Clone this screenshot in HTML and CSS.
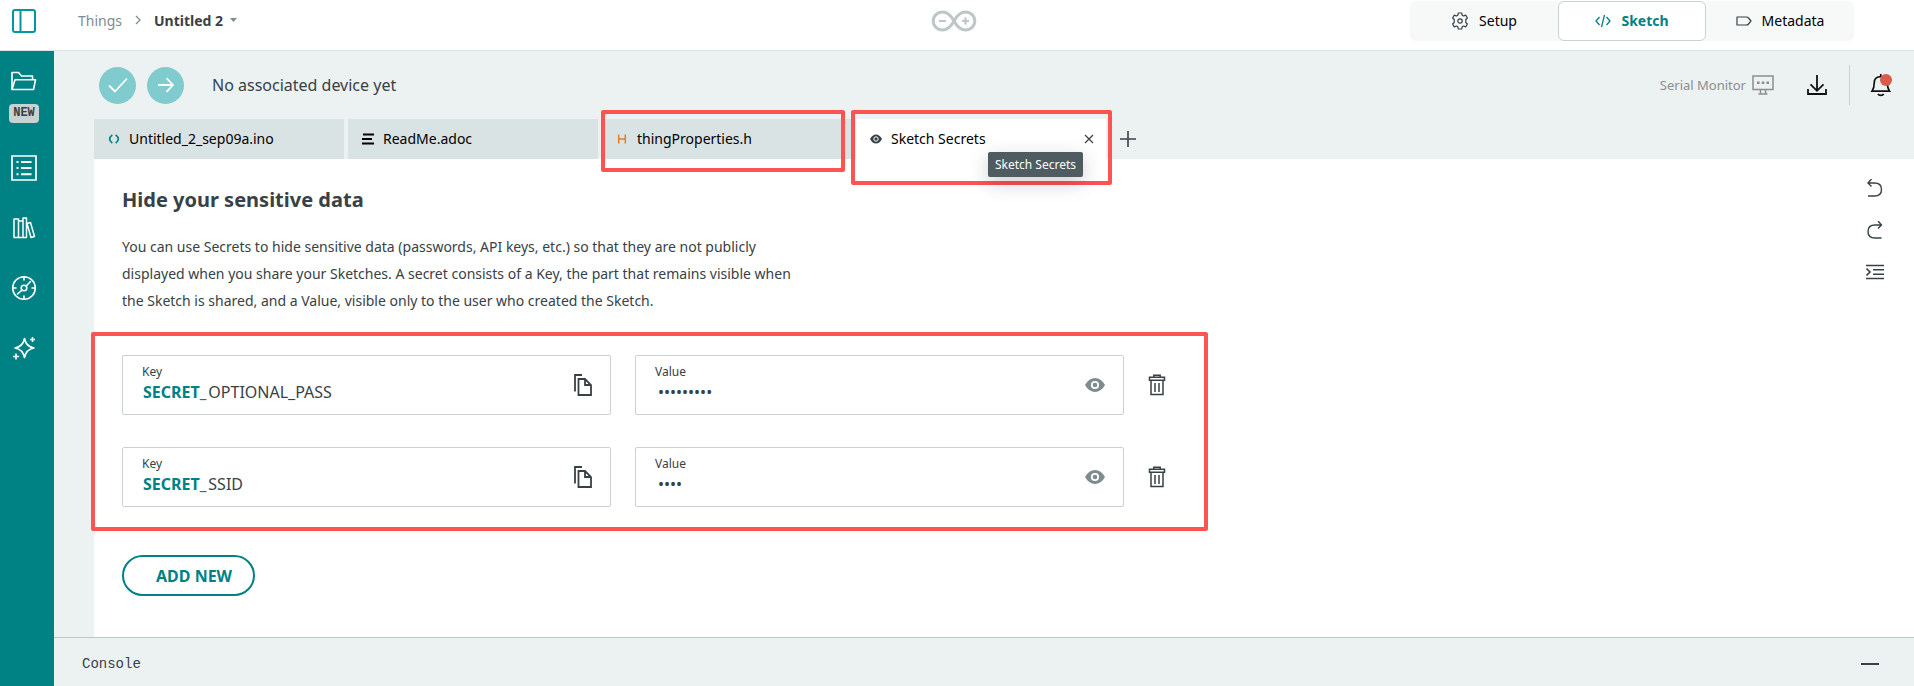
FILE: index.html
```html
<!DOCTYPE html>
<html lang="en">
<head>
<meta charset="utf-8">
<title>Untitled 2 - Sketch</title>
<link rel="stylesheet" href="styles.css">
</head>
<body>
<div class="app">
  <header class="header">
    <div class="header-left">
      <button class="icon-btn" aria-label="Toggle sidebar">
        <svg width="24" height="24" viewBox="0 0 24 24" fill="none" stroke="#00979d" stroke-width="2"><rect x="1" y="1" width="22" height="22" rx="2"/><path d="M8.500 1v22" /></svg>
      </button>
      <nav class="breadcrumb" aria-label="Breadcrumb">
        <a class="crumb" href="#">Things</a>
        <svg width="6" height="10" viewBox="0 0 6 10" fill="none" stroke="#7f8c8d" stroke-width="1.300"><path d="M1 1l4 4-4 4"/></svg>
        <button class="crumb-current">Untitled 2
          <svg width="7" height="4" viewBox="0 0 7 4" fill="#7f8c8d"><path d="M0 0h7L3.500 4z"/></svg>
        </button>
      </nav>
    </div>
    <svg class="logo" width="46" height="22" viewBox="0 0 46 22" fill="none" stroke="#bdc7c7" stroke-width="3"><path d="M23 11C20 5.500 16.500 2 11.500 2a9.300 9 0 0 0 0 18C16.500 20 20 16.500 23 11S29.500 2 34.500 2a9.300 9 0 0 1 0 18C29.500 20 26 16.500 23 11z"/><path d="M8 11h7M31 11h7M34.500 7.500v7" stroke-width="2.200"/></svg>
    <nav class="views" aria-label="Views">
      <a class="view" href="#">
        <svg width="18" height="18" viewBox="0 0 18 18" fill="none" stroke="#374146" stroke-width="1.200" stroke-linejoin="round"><path d="M7.300 1h3.400l.5 2.300 1.300.7 2.200-.9 1.700 2.900-1.600 1.500v3l1.600 1.500-1.700 2.900-2.200-.9-1.300.7-.5 2.300H7.300l-.5-2.300-1.300-.7-2.200.9-1.700-2.900 1.600-1.500v-3L1.600 6l1.700-2.900 2.200.9 1.300-.7z"/><circle cx="9" cy="9" r="2.200"/></svg>
        Setup</a>
      <a class="view view-active" href="#" aria-current="page">
        <svg width="16" height="14" viewBox="0 0 16 14" fill="none" stroke="#008184" stroke-width="1.300"><path d="M4.500 3L1 7l3.500 4M11.500 3L15 7l-3.500 4M9.500 1l-3 12"/></svg>
        Sketch</a>
      <a class="view" href="#">
        <svg width="16" height="10" viewBox="0 0 16 10" fill="none" stroke="#374146" stroke-width="1.200" stroke-linejoin="round"><path d="M1 1h9.500c1 0 1.500.4 2 1L15 5l-2.500 3c-.5.6-1 1-2 1H1z"/></svg>
        Metadata</a>
    </nav>
  </header>

  <div class="body">
    <nav class="sidebar" aria-label="Sidebar">
      <a class="side-item side-first" href="#" aria-label="Sketchbook, new">
        <svg width="26" height="20" viewBox="0 0 26 20" fill="none" stroke="#fff" stroke-width="1.600" stroke-linejoin="round"><path d="M1 18.500V1.500h6.500l3 3.500h11v3.500"/><path d="M1 18.500L4 8.800h20.500l-2 9.700z"/></svg>
        <span class="badge">NEW</span>
      </a>
      <a class="side-item" href="#" aria-label="Examples"><svg width="26" height="26" viewBox="0 0 26 26" fill="none" stroke="#fff" stroke-width="1.700"><path d="M1 1h24v24H1z"/><path d="M10 7h10.500M10 13h10.500M10 19.300h10.500" stroke-width="2"/><path d="M5.500 7h2M5.500 13h2M5.500 19.300h2" stroke-width="2"/></svg></a>
      <a class="side-item" href="#" aria-label="Libraries"><svg width="24" height="24" viewBox="0 0 24 24" fill="none" stroke="#fff" stroke-width="1.500" stroke-linejoin="round"><path d="M2 3h4.500v18.500H2zM6.500 5H11v16.500H6.500zM11 2h3.500v19.500H11zM15 7.500l3.500-1 4 14-3.500 1z"/></svg></a>
      <a class="side-item" href="#" aria-label="Reference"><svg width="26" height="26" viewBox="0 0 26 26" fill="none" stroke="#fff" stroke-width="1.600" stroke-linecap="round"><circle cx="13" cy="13" r="11.300"/><circle cx="13" cy="13" r="2.800"/><path d="M13 2v3M13 21v3M2 13h3M21 13h3M15.200 11l4.300-4.500M11 15.200L6.500 19"/></svg></a>
      <a class="side-item" href="#" aria-label="Assistant"><svg width="24" height="24" viewBox="0 0 24 24" fill="none" stroke="#fff" stroke-width="1.600" stroke-linejoin="round"><path d="M12.500 2.500c1.200 6 3.800 8.500 9.500 9.500-5.700 1-8.300 3.500-9.500 9.500C11.300 15.500 8.700 13 3 12c5.700-1 8.300-3.500 9.500-9.500z"/><path d="M20.500 1v5M18 3.500h5M4 17.500v6M1 20.500h6"/></svg></a>
    </nav>

    <div class="main">
      <div class="toolbar">
        <div class="actions">
          <button class="round" aria-label="Verify"><svg width="20" height="16" viewBox="0 0 20 16" fill="none" stroke="#fff" stroke-width="1.800"><path d="M1 8.500l6 6L19 1.500"/></svg></button>
          <button class="round" aria-label="Upload"><svg width="16" height="16" viewBox="0 0 16 16" fill="none" stroke="#fff" stroke-width="1.800"><path d="M0 8h15M8.500 1.200L15 8l-6.500 6.800"/></svg></button>
          <span class="device">No associated device yet</span>
        </div>
        <div class="tools">
          <button class="serial">Serial Monitor
            <svg width="22" height="20" viewBox="0 0 22 20" fill="none" stroke="#8b8f90" stroke-width="1.500"><path d="M1 1h20v13.500H1zM8.500 14.500v4M13.500 14.500v4M6.500 19h9"/><path d="M5 7.800h2.600M9.700 7.800h2.600M14.400 7.800H17" stroke-width="2.400"/></svg>
          </button>
          <button class="icon-btn download" aria-label="Download"><svg width="20" height="20" viewBox="0 0 20 20" fill="none" stroke="#111" stroke-width="1.800"><path d="M10 0v15.500M3.500 9.300l6.500 6.500 6.500-6.500M1 14v5h18v-5"/></svg></button>
          <span class="divider"></span>
          <button class="icon-btn bell" aria-label="Notifications"><svg width="22" height="24" viewBox="0 0 22 24" fill="none" stroke="#111" stroke-width="1.700"><path d="M2 18.200h17.500c-1.500-2.200-2.200-4-2.200-8.700 0-3.500-2.500-5.900-6.500-5.900S4.300 6 4.300 9.500c0 4.700-.8 6.500-2.300 8.700zM10.800 1v3M8 21c1 1.800 4.700 1.800 5.700 0"/><circle cx="16" cy="7" r="6" fill="#da5b4a" stroke="none"/></svg></button>
        </div>
      </div>

      <div class="tabs" role="tablist">
        <button class="tab" role="tab"><svg width="12" height="12" viewBox="0 0 12 12" fill="none" stroke="#008184" stroke-width="1.700"><path d="M4.300 1.800Q-1 6 4.300 10.200M7.700 1.800Q13 6 7.700 10.200"/></svg>Untitled_2_sep09a.ino</button>
        <button class="tab" role="tab"><svg width="12" height="12" viewBox="0 0 12 12" stroke="#000" stroke-width="2"><path d="M1 1.500h11M0 6h10M0 10.500h12"/></svg>ReadMe.adoc</button>
        <button class="tab marked" role="tab"><svg width="12" height="12" viewBox="0 0 12 12" fill="none" stroke="#e47e1e" stroke-width="1.500"><path d="M2.700 1.500v9M9.300 1.500v9M2.700 6h6.600"/></svg>thingProperties.h</button>
        <div class="tab tab-active marked marked-tall" role="tab" aria-selected="true">
          <svg width="12" height="12" viewBox="0 0 12 12"><path d="M0 6Q2.500 1.500 6 1.500T12 6Q9.500 10.500 6 10.500T0 6z" fill="#374146"/><circle cx="6" cy="6" r="2.200" fill="#374146" stroke="#fff" stroke-width="1"/></svg>Sketch Secrets
          <button class="icon-btn close" aria-label="Close tab"><svg width="10" height="10" viewBox="0 0 10 10" stroke="#374146" stroke-width="1.200"><path d="M1 1l8 8M9 1l-8 8"/></svg></button>
          <span class="tooltip" role="tooltip">Sketch Secrets</span>
        </div>
        <button class="icon-btn add-tab" aria-label="New tab"><svg width="16" height="16" viewBox="0 0 16 16" stroke="#374146" stroke-width="1.600"><path d="M8 0v16M0 8h16"/></svg></button>
      </div>

      <div class="panel">
        <section class="content">
          <h1 class="title">Hide your sensitive data</h1>
          <p class="intro">You can use Secrets to hide sensitive data (passwords, API keys, etc.) so that they are not publicly displayed when you share your Sketches. A secret consists of a Key, the part that remains visible when the Sketch is shared, and a Value, visible only to the user who created the Sketch.</p>
          <div class="secrets">
            <div class="secret">
              <div class="field">
                <div class="field-text">
                  <label class="field-label" for="key1">Key</label>
                  <div class="field-line"><span class="prefix">SECRET_</span><input class="field-input" id="key1" type="text" value="OPTIONAL_PASS"></div>
                </div>
                <button class="icon-btn" aria-label="Copy key"><svg width="20" height="22" viewBox="0 0 20 22" fill="none" stroke="#374146" stroke-width="1.800"><path d="M6.500 5H13l6 6v10H6.500zM13 5v6h6M3 17.500V1h7"/></svg></button>
              </div>
              <div class="field">
                <div class="field-text">
                  <label class="field-label" for="value1">Value</label>
                  <div class="field-line"><input class="field-input secret-input" id="value1" type="password" value="password1"></div>
                </div>
                <button class="icon-btn" aria-label="Show value"><svg width="20" height="16" viewBox="0 0 20 16"><path d="M0 8Q4 1 10 1T20 8Q16 15 10 15T0 8z" fill="#7f8c8d"/><circle cx="10" cy="8" r="3.200" fill="#7f8c8d" stroke="#fff" stroke-width="1.800"/></svg></button>
              </div>
              <button class="icon-btn" aria-label="Delete secret"><svg width="18" height="22" viewBox="0 0 18 22" fill="none" stroke="#374146" stroke-width="1.500"><path d="M1.500 3.200h15v3h-15zM5.800 3V1.200h6.400V3M3 6.500V20.500h12V6.500M7 9v9M11 9v9"/></svg></button>
            </div>
            <div class="secret">
              <div class="field">
                <div class="field-text">
                  <label class="field-label" for="key2">Key</label>
                  <div class="field-line"><span class="prefix">SECRET_</span><input class="field-input" id="key2" type="text" value="SSID"></div>
                </div>
                <button class="icon-btn" aria-label="Copy key"><svg width="20" height="22" viewBox="0 0 20 22" fill="none" stroke="#374146" stroke-width="1.800"><path d="M6.500 5H13l6 6v10H6.500zM13 5v6h6M3 17.500V1h7"/></svg></button>
              </div>
              <div class="field">
                <div class="field-text">
                  <label class="field-label" for="value2">Value</label>
                  <div class="field-line"><input class="field-input secret-input" id="value2" type="password" value="wifi"></div>
                </div>
                <button class="icon-btn" aria-label="Show value"><svg width="20" height="16" viewBox="0 0 20 16"><path d="M0 8Q4 1 10 1T20 8Q16 15 10 15T0 8z" fill="#7f8c8d"/><circle cx="10" cy="8" r="3.200" fill="#7f8c8d" stroke="#fff" stroke-width="1.800"/></svg></button>
              </div>
              <button class="icon-btn" aria-label="Delete secret"><svg width="18" height="22" viewBox="0 0 18 22" fill="none" stroke="#374146" stroke-width="1.500"><path d="M1.500 3.200h15v3h-15zM5.800 3V1.200h6.400V3M3 6.500V20.500h12V6.500M7 9v9M11 9v9"/></svg></button>
            </div>
          </div>
          <button class="add-new">ADD NEW</button>
        </section>
        <div class="edit-tools">
          <button class="icon-btn" aria-label="Undo"><svg width="18" height="18" viewBox="0 0 18 18" fill="none" stroke="#374146" stroke-width="1.400"><path d="M5.500 0L2 4l3.500 3.500M2 4h6.500C13 4 15.500 6.500 15.500 10.500S13 17 8.500 17H2"/></svg></button>
          <button class="icon-btn" aria-label="Redo"><svg width="18" height="18" viewBox="0 0 18 18" fill="none" stroke="#374146" stroke-width="1.400"><path d="M12 0l3.500 4L12 7.500M15.500 4H9C4.500 4 2 6.500 2 10.500S4.500 17 9 17h6.500"/></svg></button>
          <button class="icon-btn" aria-label="Indent"><svg width="18" height="18" viewBox="0 0 18 18" fill="none" stroke="#374146" stroke-width="1.600"><path d="M0 2.500h18M7 6.800h11M7 11.200h11M0 15.500h18M.5 5.500L4 9 .5 12.500"/></svg></button>
        </div>
      </div>

      <footer class="console">
        <span>Console</span>
        <button class="icon-btn" aria-label="Minimize console"><svg width="18" height="18" viewBox="0 0 18 18" stroke="#374146" stroke-width="2"><path d="M0 9h18"/></svg></button>
      </footer>
    </div>
  </div>
</div>
</body>
</html>
```
FILE: styles.css
```css
* { box-sizing: border-box; }

body {
  margin: 0;
  font-family: "Noto Sans", "Open Sans", sans-serif;
  font-size: 14px;
  color: #374146;
}

button, input { font: inherit; color: inherit; }
button { padding: 0; border: 0; background: none; }
a { color: inherit; text-decoration: none; }
svg { display: block; flex: none; }

.icon-btn { display: flex; align-items: center; justify-content: center; flex: none; }

.app { display: flex; flex-direction: column; min-height: 100vh; }

.header {
  display: grid;
  grid-template-columns: 1fr auto 1fr;
  align-items: center;
  padding: 1px 0 9px;
  border-bottom: 1px solid #dae3e3;
  background: #fff;
}
.header-left { display: flex; align-items: center; gap: 42px; padding-left: 12px; }
.breadcrumb { display: flex; align-items: center; gap: 13px; padding-bottom: 2px; }
.crumb { color: #7f8c8d; }
.crumb-current { display: flex; align-items: center; gap: 7px; font-weight: 700; }
.logo { margin-right: 6px; }

.views {
  display: flex;
  justify-self: end;
  margin-right: 60px;
  border-radius: 6px;
  background: #f7f9f9;
}
.view {
  display: flex;
  align-items: center;
  justify-content: center;
  gap: 10px;
  width: 148px;
  height: 40px;
  padding-bottom: 1px;
  color: #000;
}
.view-active {
  border: 1px solid #c9d2d2;
  border-radius: 6px;
  background: #fff;
  color: #008184;
  font-weight: 700;
}

.body { display: flex; flex: 1; }

.sidebar {
  display: flex;
  flex-direction: column;
  flex: none;
  gap: 34px;
  width: 54px;
  padding: 20px 6px 0 0;
  background: #008184;
}
.side-item {
  display: flex;
  flex-direction: column;
  align-items: center;
  justify-content: center;
  height: 26px;
}
.side-first { gap: 13px; height: 50px; padding-top: 2px; }
.badge {
  padding: 0 4px;
  border-radius: 4px;
  background: #c9d2d2;
  font: 700 12px/19px "Liberation Mono", monospace;
}

.main {
  display: flex;
  flex: 1;
  flex-direction: column;
  min-width: 0;
  background: #ecf1f1;
}

.toolbar {
  display: flex;
  align-items: center;
  justify-content: space-between;
  height: 68px;
  padding: 0 22px 0 45px;
}
.actions { display: flex; align-items: center; gap: 11px; }
.round {
  display: flex;
  align-items: center;
  justify-content: center;
  width: 37px;
  height: 37px;
  border-radius: 50%;
  background: #7fcbcd;
}
.device { margin-left: 17px; font-size: 16px; }
.tools { display: flex; align-items: center; }
.serial { display: flex; align-items: center; gap: 6px; font-size: 13px; color: #8b8f90; }
.download { margin: 0 22px 0 33px; }
.divider { width: 1px; height: 40px; background: #c9d2d2; }
.bell { margin-left: 20px; }

.tabs { display: flex; gap: 4px; height: 40px; padding-left: 40px; }
.tab {
  position: relative;
  display: flex;
  align-items: center;
  gap: 9px;
  width: 250px;
  padding: 0 12px 1px 14px;
  background: #dae3e3;
  color: #000;
}
.tab-active { background: #fff; }
.close { margin-left: auto; }
.add-tab { margin-left: 10px; }

/* Highlight frames */
.marked::after {
  content: "";
  position: absolute;
  z-index: 1;
  inset: -9px 7px -13px -1px;
  border: 4px solid #fd5353;
  border-radius: 2px;
  pointer-events: none;
}
.marked-tall::after { inset: -9px -6px -26px -5px; }

.tooltip {
  position: absolute;
  z-index: 2;
  top: 33px;
  right: 23px;
  padding: 0 7px;
  border-radius: 2px;
  background: #4e5b61;
  box-shadow: 0 6px 20px rgba(0, 0, 0, 0.2);
  color: #fff;
  font-size: 12px;
  line-height: 25px;
  white-space: nowrap;
}

.panel {
  display: flex;
  flex: 1;
  justify-content: space-between;
  margin-left: 40px;
  background: #fff;
}
.content { flex: 0 1 1114px; padding: 28px 0 40px; }
.title { margin: 0 28px; font-size: 20px; line-height: 26px; }
.intro { max-width: 690px; margin: 20px 28px 18px; line-height: 27px; }

.secrets {
  display: flex;
  flex-direction: column;
  gap: 32px;
  margin-left: -3px;
  padding: 19px 38px 20px 27px;
  border: 4px solid #fd5353;
  border-radius: 2px;
}
.secret { display: flex; align-items: center; gap: 24px; }
.field {
  display: flex;
  flex: 1;
  align-items: center;
  min-width: 0;
  height: 60px;
  padding: 0 18px 0 19px;
  border: 1px solid #c9d2d2;
  border-radius: 2px;
}
.field-text { flex: 1; min-width: 0; }
.field-label { display: block; font-size: 12px; line-height: 18px; }
.field-line { display: flex; align-items: center; padding-bottom: 4px; }
.prefix { padding: 0 2px 0 1px; color: #008184; font-size: 16px; font-weight: 700; line-height: 22px; }
.field-input {
  flex: 1;
  min-width: 0;
  height: 22px;
  padding: 0;
  border: 0;
  outline: 0;
  background: none;
  font-size: 16px;
}
.secret-input { padding-left: 3px; }

.add-new {
  height: 41px;
  margin: 24px 28px 0;
  padding: 0 21px 0 32px;
  border: 2px solid #008184;
  border-radius: 21px;
  color: #008184;
  font-size: 16px;
  font-weight: 700;
}

.edit-tools { display: flex; flex-direction: column; gap: 24px; padding: 20px 30px 0 0; }

.console {
  display: flex;
  align-items: center;
  justify-content: space-between;
  height: 49px;
  padding: 3px 35px 0 28px;
  border-top: 1px solid #bdc7c7;
  background: #ecf1f1;
  font-family: "Liberation Mono", monospace;
}
```
